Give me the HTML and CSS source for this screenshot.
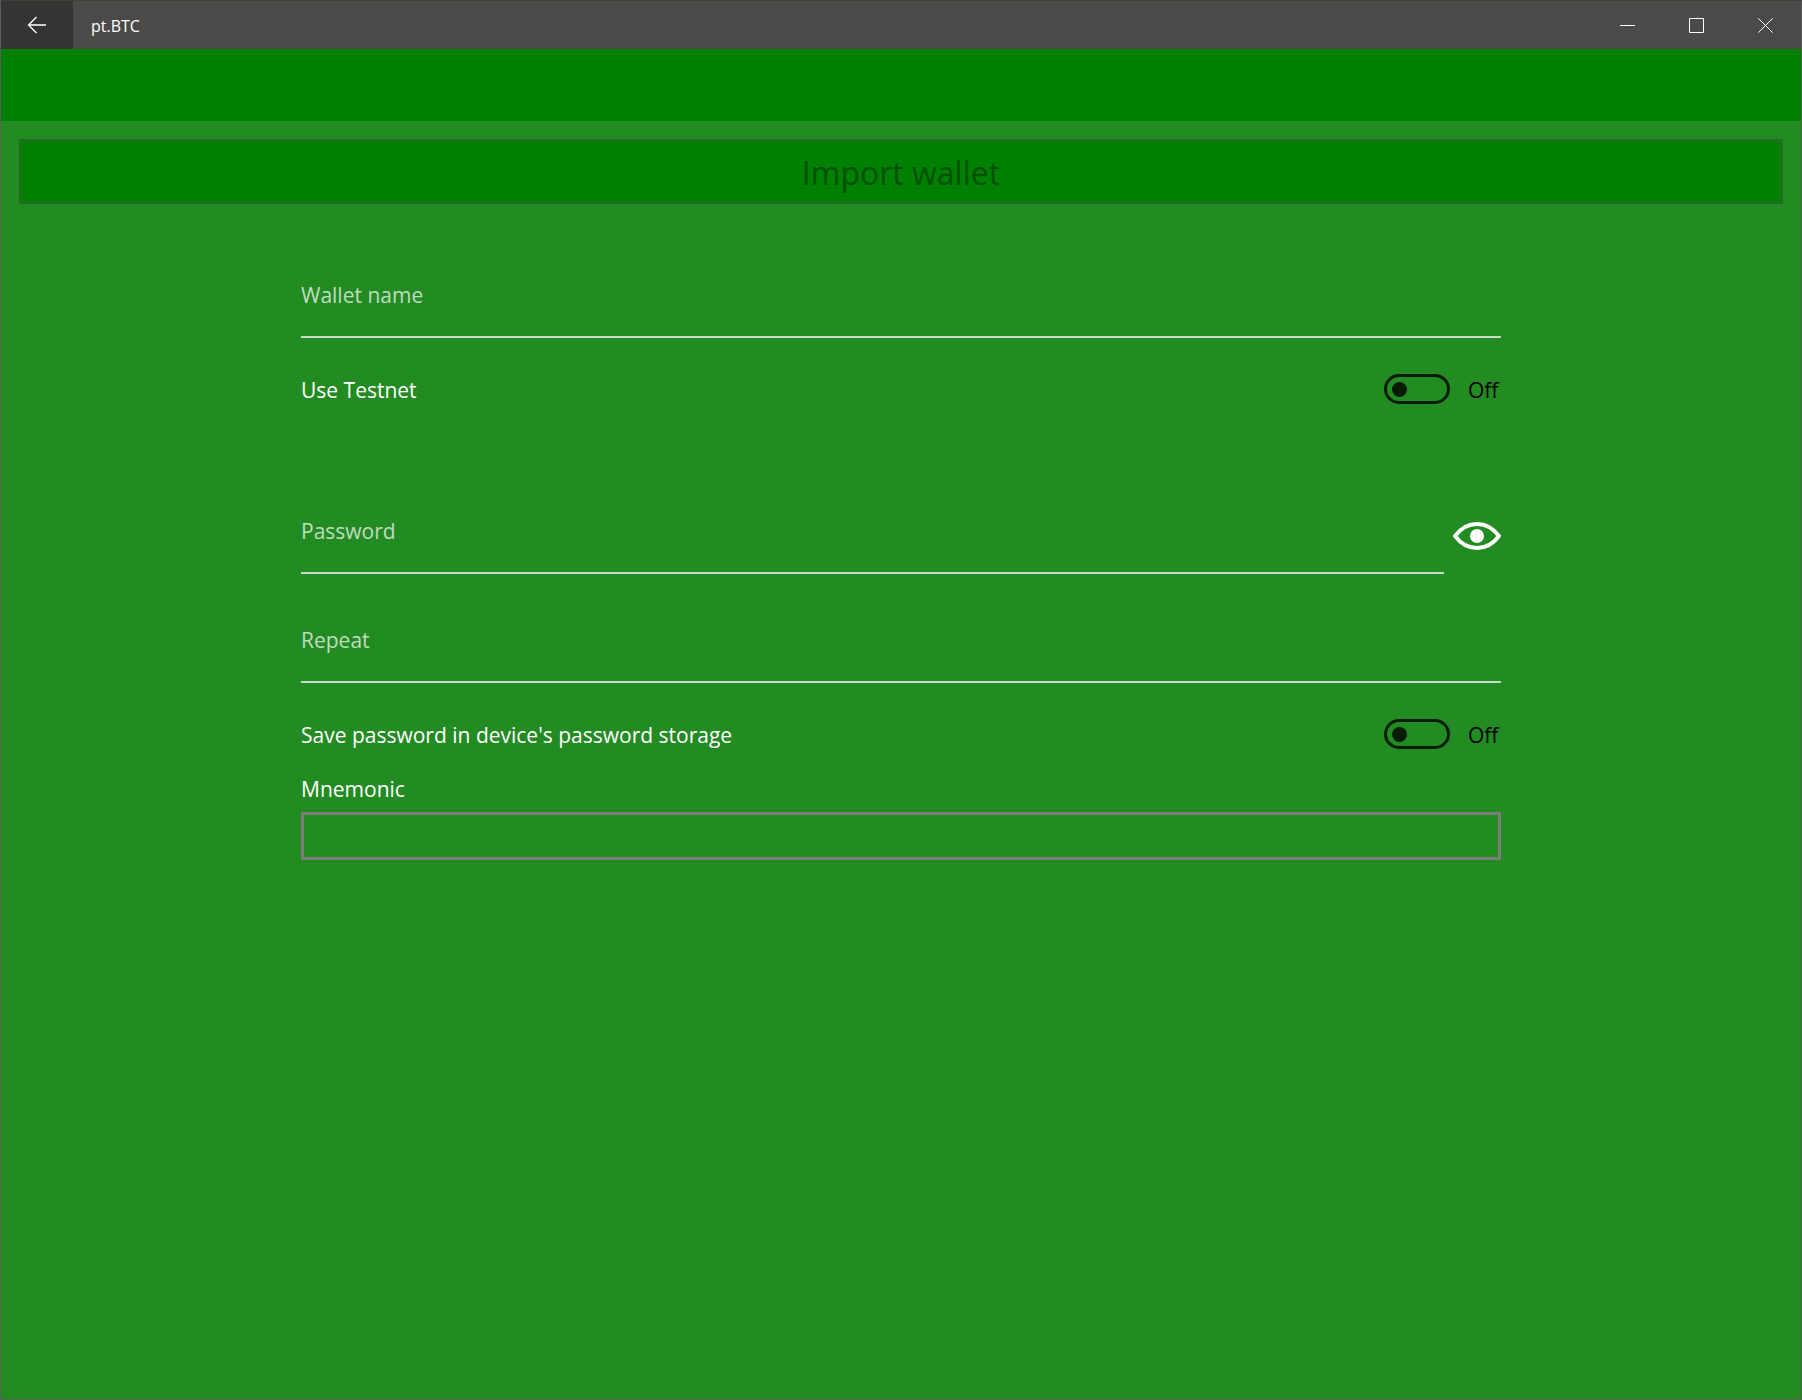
FILE: index.html
```html
<!DOCTYPE html>
<html lang="en">
<head>
  <meta charset="utf-8">
  <meta name="viewport" content="width=device-width, initial-scale=1">
  <title>pt.BTC</title>
  <link rel="stylesheet" href="styles.css">
</head>
<body>
  <div class="window">
    <header class="titlebar">
      <button class="back" type="button" aria-label="Back">
        <svg width="20" height="18" viewBox="0 0 20 18"><path d="M19 9H1.5M9.5 1L1.5 9L9.5 17"/></svg>
      </button>
      <span class="app-name">pt.BTC</span>
      <button class="caption" type="button" aria-label="Minimize">
        <svg width="15" height="15" viewBox="0 0 15 15"><path d="M0 7.5H15"/></svg>
      </button>
      <button class="caption" type="button" aria-label="Maximize">
        <svg width="15" height="15" viewBox="0 0 15 15"><path d="M.5 .5H14.5V14.5H.5Z"/></svg>
      </button>
      <button class="caption" type="button" aria-label="Close">
        <svg width="15" height="15" viewBox="0 0 15 15"><path d="M.3 .3L14.7 14.7M14.7 .3L.3 14.7"/></svg>
      </button>
    </header>
    <div class="toolbar"></div>
    <main class="page">
      <button class="import" type="submit" form="wallet-form" disabled>Import wallet</button>
      <form class="form" id="wallet-form">
        <input class="entry" type="text" placeholder="Wallet name" aria-label="Wallet name">
        <div class="switch-row">
          <label for="testnet">Use Testnet</label>
          <input class="switch" id="testnet" type="checkbox" role="switch">
          <span class="state">Off</span>
        </div>
        <div class="password-row">
          <input class="entry" type="password" placeholder="Password" aria-label="Password">
          <button class="reveal" type="button" aria-label="Show password">
            <svg width="48" height="28" viewBox="0 0 48 28">
              <path d="M2 14C14 -2 34 -2 46 14C34 30 14 30 2 14Z" fill="none" stroke="#fff" stroke-width="3.8" stroke-linejoin="round"/>
              <circle cx="24" cy="14" r="7" fill="#fff"/>
            </svg>
          </button>
        </div>
        <input class="entry" type="password" placeholder="Repeat" aria-label="Repeat">
        <div class="switch-row">
          <label for="save">Save password in device's password storage</label>
          <input class="switch" id="save" type="checkbox" role="switch">
          <span class="state">Off</span>
        </div>
        <label class="mnemonic-label" for="mnemonic">Mnemonic</label>
        <input class="mnemonic" id="mnemonic" type="text">
      </form>
    </main>
  </div>
</body>
</html>
```
FILE: styles.css
```css
* {
  box-sizing: border-box;
}

body {
  margin: 0;
  font-family: "Open Sans", "Noto Sans", sans-serif;
  font-size: 21px;
  line-height: 30px;
  color: #fff;
}

button,
input {
  margin: 0;
  padding: 0;
  border: 0;
  border-radius: 0;
  background: none;
  color: inherit;
  font: inherit;
  outline: none;
}

.window {
  display: flex;
  flex-direction: column;
  min-height: 100vh;
  border: 1px solid #5c5c5a;
  border-top-color: #403f3c;
  background: #228b22;
}

.titlebar {
  display: flex;
  height: 48px;
  padding-right: 1px;
  background: #4c4a48;
}

.titlebar svg {
  fill: none;
  stroke: #fff;
}

.back,
.caption {
  display: flex;
  align-items: center;
  justify-content: center;
}

.back {
  width: 72px;
  background: #353432;
}

.back svg {
  stroke-width: 1.3;
}

.caption {
  width: 69px;
}

.app-name {
  flex: 1;
  padding-left: 18px;
  font-size: 16px;
  line-height: 50px;
}

.toolbar {
  height: 72px;
  background: #008000;
}

.page {
  display: flex;
  flex-direction: column;
  padding: 18px;
}

.import {
  height: 65px;
  padding-top: 2px;
  border: 3px solid #1c6f1c;
  background: #008000;
  color: #005000;
  font-size: 32px;
}

.form {
  display: flex;
  flex-direction: column;
  width: 100%;
  max-width: 1200px;
  margin: 50px auto 0;
}

.entry {
  width: 100%;
  height: 84px;
  border-bottom: 2px solid #c8dcc8;
}

.entry::placeholder {
  color: #c0dcc0;
  opacity: 1;
}

.switch-row {
  display: flex;
  align-items: center;
  height: 30px;
  margin-top: 36px;
}

.switch-row label,
.state {
  padding-top: 2px;
}

.switch-row label {
  flex: 1;
}

.switch {
  display: flex;
  align-items: center;
  width: 66px;
  height: 30px;
  padding-left: 5px;
  border: 3px solid #061c06;
  border-radius: 15px;
  appearance: none;
}

.switch::before {
  content: "";
  width: 15px;
  height: 15px;
  border-radius: 50%;
  background: #061c06;
}

.switch:checked {
  flex-direction: row-reverse;
  padding: 0 5px 0 0;
}

.state {
  min-width: 33px;
  margin-left: 18px;
  color: #000;
}

.password-row {
  display: flex;
  gap: 9px;
  margin: 86px 0 25px;
}

.password-row .entry {
  flex: 1;
}

.reveal {
  display: flex;
  align-items: center;
  padding-top: 8px;
}

.mnemonic-label {
  margin: 25px 0 8px;
}

.mnemonic {
  height: 48px;
  padding: 0 12px;
  border: 3px solid #7c7c7c;
}
```
